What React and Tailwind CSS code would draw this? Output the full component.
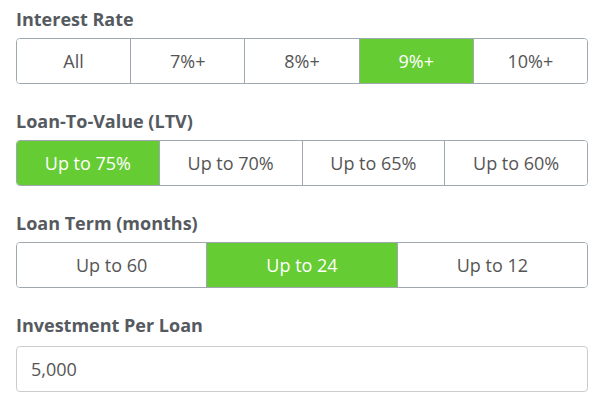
import { useState } from "react";

const Segmented = ({ options, active, onChange }) => (
  <div className="flex h-[46px] rounded border border-[#9ea8ae] overflow-hidden">
    {options.map((opt, i) => (
      <button
        key={opt}
        onClick={() => onChange(i)}
        className={`flex-1 basis-0 min-w-0 flex items-center justify-center text-[18px] ${
          i > 0 ? "border-l border-[#9ea8ae]" : ""
        } ${i === active ? "bg-[#66cc33] text-white" : "bg-white text-[#555]"}`}
      >
        {opt}
      </button>
    ))}
  </div>
);

const Label = ({ children }) => (
  <div className="text-[18px] leading-[24px] font-bold text-[#555a60] mb-[7px]">{children}</div>
);

export default function App() {
  const [rate, setRate] = useState(3);
  const [ltv, setLtv] = useState(0);
  const [term, setTerm] = useState(1);
  const [amount, setAmount] = useState("5,000");

  return (
    <div className="w-[608px] h-[416px] bg-white pl-4 pr-5 pt-[7px] font-['Open_Sans',sans-serif]">
      <Label>Interest Rate</Label>
      <Segmented options={["All", "7%+", "8%+", "9%+", "10%+"]} active={rate} onChange={setRate} />

      <div className="mt-[25px]">
        <Label>Loan-To-Value (LTV)</Label>
        <Segmented
          options={["Up to 75%", "Up to 70%", "Up to 65%", "Up to 60%"]}
          active={ltv}
          onChange={setLtv}
        />
      </div>

      <div className="mt-[25px]">
        <Label>Loan Term (months)</Label>
        <Segmented options={["Up to 60", "Up to 24", "Up to 12"]} active={term} onChange={setTerm} />
      </div>

      <div className="mt-[25px]">
        <Label>Investment Per Loan</Label>
        <input
          type="text"
          value={amount}
          onChange={(e) => setAmount(e.target.value)}
          className="w-full h-[46px] mt-[2px] rounded border border-[#cccccc] px-[14px] text-[18px] text-[#555] outline-none"
        />
      </div>
    </div>
  );
}
